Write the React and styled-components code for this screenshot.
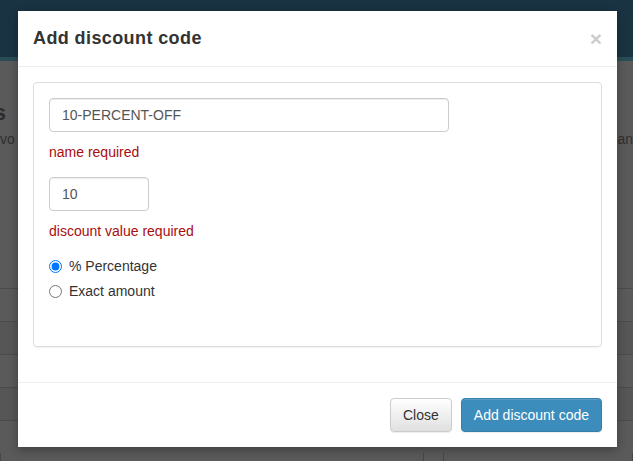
import React from "react";
import styled, { createGlobalStyle } from "styled-components";

const GlobalStyle = createGlobalStyle`
  html, body {
    margin: 0;
    padding: 0;
    background: #5a5a5a;
    font-family: "Liberation Sans", Arial, Helvetica, sans-serif;
    font-size: 14px;
    line-height: 1.42857;
    color: #333;
  }
  * { box-sizing: border-box; }
`;

const Page = styled.div`
  position: relative;
  width: 633px;
  height: 461px;
  overflow: hidden;
  background: #5a5a5a;
`;

const NavBar = styled.div`
  height: 57px;
  background: #1a3342;
  border-bottom: 4px solid #2a4d57;
  box-sizing: content-box;
`;

const PageHeading = styled.div`
  margin-top: 36px;
  height: 24px;
  font-size: 22px;
  font-weight: bold;
  color: #2b2b2b;
  white-space: nowrap;
  overflow: hidden;
  direction: rtl;
  width: 6px;
`;

const IntroRow = styled.div`
  display: flex;
  justify-content: space-between;
  margin-top: 9px;
  font-size: 14px;
  color: #2f2f2f;
`;

const Table = styled.div`
  margin-top: 138px;
`;

const TableRow = styled.div`
  height: 33px;
  border-top: 1px solid #4b4b4b;
  background: ${(p) => (p.$shade ? "#565656" : "#5a5a5a")};
`;

const BottomBoxes = styled.div`
  display: grid;
  grid-template-columns: 424px 1fr;
  gap: 19px;
  height: 10px;
`;

const BottomBox = styled.div`
  border: 1px solid #474747;
  border-top: none;
  border-radius: 0 0 4px 4px;
`;

const Modal = styled.div`
  position: absolute;
  top: 11px;
  left: 18px;
  width: 599px;
  background: #fff;
  box-shadow: 0 3px 9px rgba(0, 0, 0, 0.3);
`;

const ModalHeader = styled.div`
  display: flex;
  align-items: center;
  justify-content: space-between;
  padding: 15px;
  border-bottom: 1px solid #eee;
`;

const ModalTitle = styled.h4`
  margin: 0;
  font-size: 18px;
  font-weight: bold;
  line-height: 25px;
  letter-spacing: 0.4px;
  color: #333;
`;

const CloseX = styled.span`
  font-size: 21px;
  font-weight: bold;
  line-height: 1;
  color: #000;
  opacity: 0.2;
`;

const ModalBody = styled.div`
  padding: 15px;
`;

const Panel = styled.div`
  border: 1px solid #ddd;
  border-radius: 4px;
  box-shadow: 0 1px 1px rgba(0, 0, 0, 0.05);
  padding: 15px;
  margin-bottom: 20px;
`;

const TextInput = styled.input`
  display: block;
  width: ${(p) => p.$width}px;
  height: 34px;
  padding: 6px 12px;
  font-family: inherit;
  font-size: 14px;
  color: #555;
  border: 1px solid #ccc;
  border-radius: 4px;
  box-shadow: inset 0 1px 1px rgba(0, 0, 0, 0.075);
  outline: none;
`;

const ErrorText = styled.div`
  margin: 10px 0 15px;
  color: #a80d0d;
  line-height: 20px;
`;

const RadioGroup = styled.div`
  display: flex;
  flex-direction: column;
  gap: 5px;
  margin-bottom: 30px;
`;

const RadioLabel = styled.label`
  display: flex;
  align-items: center;
  gap: 7px;
  line-height: 20px;
  color: #333;

  input {
    margin: 0;
    width: 13px;
    height: 13px;
  }
`;

const ModalFooter = styled.div`
  display: flex;
  justify-content: flex-end;
  gap: 9px;
  padding: 15px;
  border-top: 1px solid #eee;
`;

const Button = styled.button`
  height: 34px;
  padding: 6px 12px;
  font-family: inherit;
  font-size: 14px;
  border-radius: 4px;
  border: 1px solid ${(p) => (p.$primary ? "#367fa9" : "#ccc")};
  background: ${(p) =>
    p.$primary ? "#3c8dbc" : "linear-gradient(to bottom, #fff 0%, #e0e0e0 100%)"};
  color: ${(p) => (p.$primary ? "#fff" : "#333")};
  box-shadow: inset 0 1px 0 rgba(255, 255, 255, 0.15), 0 1px 1px rgba(0, 0, 0, 0.075);
`;

export default function App() {
  return (
    <Page>
      <GlobalStyle />
      <NavBar />
      <PageHeading>Discount codes</PageHeading>
      <IntroRow>
        <span>vo</span>
        <span>an</span>
      </IntroRow>
      <Table>
        {[0, 1, 2, 3, 4].map((i) => (
          <TableRow key={i} $shade={i % 2 === 1} />
        ))}
      </Table>
      <BottomBoxes>
        <BottomBox />
        <BottomBox />
      </BottomBoxes>

      <Modal>
        <ModalHeader>
          <ModalTitle>Add discount code</ModalTitle>
          <CloseX>×</CloseX>
        </ModalHeader>
        <ModalBody>
          <Panel>
            <TextInput $width={400} defaultValue="10-PERCENT-OFF" />
            <ErrorText>name required</ErrorText>
            <TextInput $width={100} defaultValue="10" />
            <ErrorText>discount value required</ErrorText>
            <RadioGroup>
              <RadioLabel>
                <input type="radio" name="kind" defaultChecked />
                % Percentage
              </RadioLabel>
              <RadioLabel>
                <input type="radio" name="kind" />
                Exact amount
              </RadioLabel>
            </RadioGroup>
          </Panel>
        </ModalBody>
        <ModalFooter>
          <Button>Close</Button>
          <Button $primary>Add discount code</Button>
        </ModalFooter>
      </Modal>
    </Page>
  );
}
